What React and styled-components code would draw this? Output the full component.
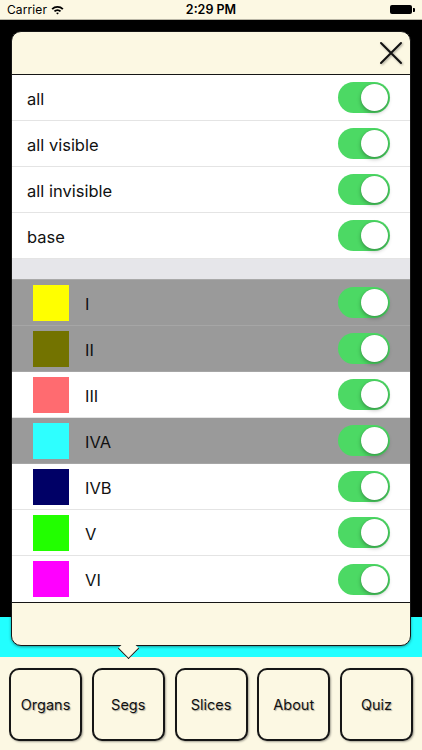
import React from 'react';
import styled, { createGlobalStyle } from 'styled-components';

const GlobalStyle = createGlobalStyle`
  html, body {
    margin: 0;
    padding: 0;
    background: #000;
  }
  body {
    font-family: Inter, Roboto, "Liberation Sans", sans-serif;
    -webkit-font-smoothing: antialiased;
  }
`;

const Screen = styled.div`
  width: 422px;
  height: 750px;
  display: flex;
  flex-direction: column;
  overflow: hidden;
`;

const StatusBar = styled.div`
  height: 20px;
  flex: none;
  background: #fcf8e3;
  border-bottom: 1px solid #b9b6a6;
  box-sizing: border-box;
  display: grid;
  grid-template-columns: 1fr auto 1fr;
  align-items: center;
  padding: 0 7px;
  font-size: 12px;
  color: #000;
`;

const Carrier = styled.div`
  display: flex;
  align-items: center;
  gap: 4px;
  letter-spacing: 0.1px;
`;

const Clock = styled.div`
  font-weight: 600;
  font-size: 12.5px;
`;

const Battery = styled.div`
  justify-self: end;
  display: flex;
  align-items: center;
  gap: 1px;
`;

const BatteryBody = styled.div`
  width: 22px;
  height: 9px;
  border-radius: 2px;
  background: #000;
`;

const BatteryNub = styled.div`
  width: 2px;
  height: 4px;
  background: #000;
  border-radius: 0 1px 1px 0;
`;

const Stage = styled.div`
  height: 637px;
  flex: none;
  background: linear-gradient(#000 0, #000 597px, #22ffff 597px);
  padding: 11px 11px 0 11px;
  box-sizing: border-box;
  position: relative;
`;

const Popover = styled.div`
  width: 400px;
  height: 615px;
  box-sizing: border-box;
  background: #fcf8e3;
  border: 1.5px solid #161616;
  border-radius: 10px;
  display: flex;
  flex-direction: column;
  position: relative;
  box-shadow: 0 1px 3px rgba(0, 0, 0, 0.4);

  &::after {
    content: '';
    position: absolute;
    left: 109px;
    bottom: -11px;
    width: 14px;
    height: 14px;
    background: #fcf8e3;
    border-right: 1.5px solid #161616;
    border-bottom: 1.5px solid #161616;
    transform: rotate(45deg);
  }
`;

const Header = styled.div`
  height: 42px;
  flex: none;
  display: flex;
  justify-content: flex-end;
  align-items: center;
  padding-right: 7px;
  border-bottom: 1.5px solid #161616;
`;

const CloseButton = styled.button`
  background: none;
  border: none;
  padding: 0;
  width: 24px;
  height: 24px;
  display: flex;
  align-items: center;
  justify-content: center;
  filter: drop-shadow(1px 1px 1px rgba(0, 0, 0, 0.35));
`;

const List = styled.div`
  height: 527px;
  flex: none;
  background: #fff;
  display: flex;
  flex-direction: column;
  border-bottom: 1.5px solid #161616;
`;

const Row = styled.div`
  height: 46px;
  flex: none;
  box-sizing: border-box;
  display: flex;
  align-items: center;
  padding: 2px 20px 0 15px;
  background: ${(p) => (p.$dim ? '#9a9a9a' : '#fff')};
  border-bottom: 1px solid ${(p) => (p.$dim ? '#a6a6a6' : '#e4e4e4')};
  &:last-child {
    border-bottom: none;
  }
`;

const SectionGap = styled.div`
  height: 21px;
  flex: none;
  box-sizing: border-box;
  background: #e6e6ea;
  border-bottom: 1px solid #a9a9a9;
`;

const Swatch = styled.div`
  width: 36px;
  height: 36px;
  margin: -2px 16px 0 6px;
  background: ${(p) => p.$color};
  flex: none;
`;

const Label = styled.div`
  flex: 1;
  font-size: 16.5px;
  color: #111;
`;

const Toggle = styled.div`
  width: 52px;
  height: 31px;
  margin-top: -2px;
  border-radius: 16px;
  background: #4cd964;
  position: relative;
  flex: none;

  &::after {
    content: '';
    position: absolute;
    right: 2px;
    top: 2px;
    width: 27px;
    height: 27px;
    border-radius: 50%;
    background: #fff;
    box-shadow: 0 2px 4px rgba(0, 0, 0, 0.3), 0 0 1px rgba(0, 0, 0, 0.2);
  }
`;

const Footer = styled.div`
  flex: 1;
`;

const TabBar = styled.div`
  flex: 1;
  background: #fcf8e3;
  display: flex;
  justify-content: space-between;
  align-items: flex-start;
  padding: 11px 9px 0 9px;
`;

const TabButton = styled.button`
  width: 73px;
  height: 73px;
  box-sizing: border-box;
  border: 2px solid #161616;
  border-radius: 10px;
  background: #fcf8e3;
  box-shadow: 1px 1px 2px rgba(0, 0, 0, 0.35);
  font-family: inherit;
  font-size: 14.5px;
  color: #111;
  text-shadow: 1px 1px 1px rgba(0, 0, 0, 0.3);
  padding: 0;
`;

const WifiIcon = () => (
  <svg width="13" height="10" viewBox="0 0 13 10">
    <path d="M0.5 3.4 A8.5 8.5 0 0 1 12.5 3.4 L11.2 4.8 A6.6 6.6 0 0 0 1.8 4.8 Z" fill="#000" />
    <path d="M2.8 5.8 A5.2 5.2 0 0 1 10.2 5.8 L8.9 7.1 A3.4 3.4 0 0 0 4.1 7.1 Z" fill="#000" />
    <path d="M5.1 8.1 A2 2 0 0 1 7.9 8.1 L6.5 9.6 Z" fill="#000" />
  </svg>
);

const CloseIcon = () => (
  <svg width="24" height="24" viewBox="0 0 24 24">
    <path d="M2 2 L22 22 M22 2 L2 22" stroke="#111" strokeWidth="2" strokeLinecap="round" />
  </svg>
);

const general = ['all', 'all visible', 'all invisible', 'base'];

const segments = [
  { name: 'I', color: '#ffff00', dim: true },
  { name: 'II', color: '#737300', dim: true },
  { name: 'III', color: '#ff6b70', dim: false },
  { name: 'IVA', color: '#2effff', dim: true },
  { name: 'IVB', color: '#000066', dim: false },
  { name: 'V', color: '#22ff00', dim: false },
  { name: 'VI', color: '#ff00ff', dim: false },
];

const tabs = ['Organs', 'Segs', 'Slices', 'About', 'Quiz'];

export default function App() {
  return (
    <>
      <GlobalStyle />
      <Screen>
        <StatusBar>
          <Carrier>
            Carrier <WifiIcon />
          </Carrier>
          <Clock>2:29 PM</Clock>
          <Battery>
            <BatteryBody />
            <BatteryNub />
          </Battery>
        </StatusBar>
        <Stage>
          <Popover>
            <Header>
              <CloseButton>
                <CloseIcon />
              </CloseButton>
            </Header>
            <List>
              {general.map((name) => (
                <Row key={name}>
                  <Label>{name}</Label>
                  <Toggle />
                </Row>
              ))}
              <SectionGap />
              {segments.map((s) => (
                <Row key={s.name} $dim={s.dim}>
                  <Swatch $color={s.color} />
                  <Label>{s.name}</Label>
                  <Toggle />
                </Row>
              ))}
            </List>
            <Footer />
          </Popover>
        </Stage>
        <TabBar>
          {tabs.map((t) => (
            <TabButton key={t}>{t}</TabButton>
          ))}
        </TabBar>
      </Screen>
    </>
  );
}
